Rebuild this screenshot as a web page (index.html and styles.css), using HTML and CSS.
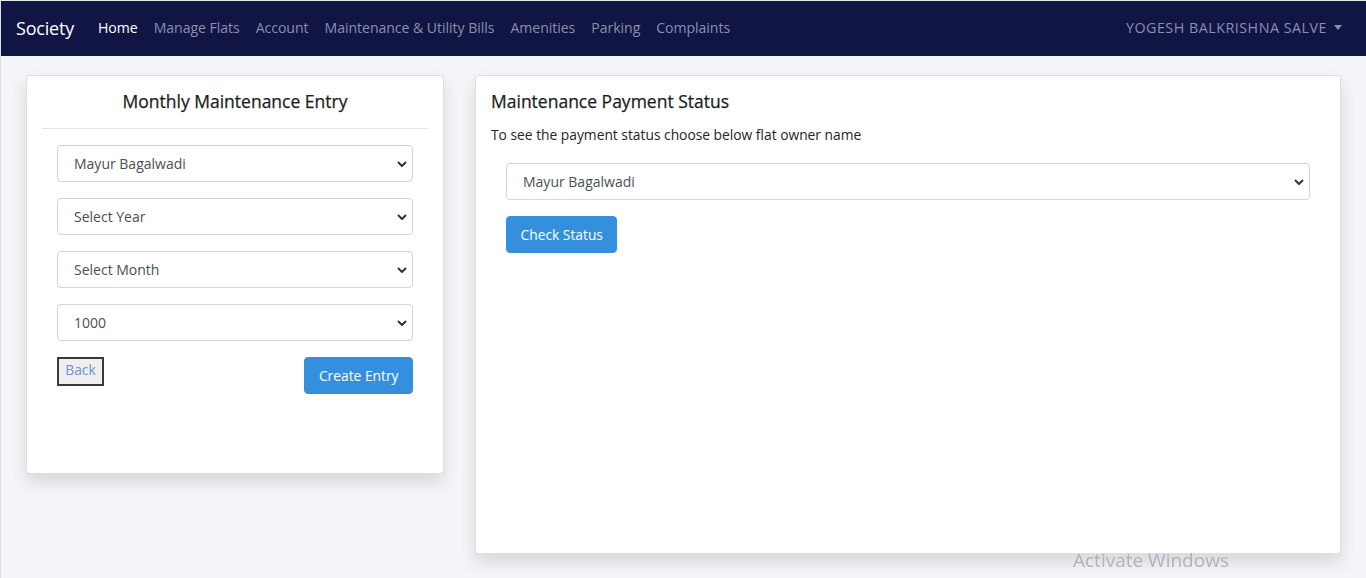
FILE: index.html
```html
<!DOCTYPE html>
<html>
<head>
<meta charset="utf-8">
<link rel="stylesheet" href="styles.css">
</head>
<body>
<nav class="navbar">
  <a class="brand">Society</a>
  <ul class="nav-links">
    <li class="active">Home</li>
    <li>Manage Flats</li>
    <li>Account</li>
    <li>Maintenance &amp; Utility Bills</li>
    <li>Amenities</li>
    <li>Parking</li>
    <li>Complaints</li>
  </ul>
  <div class="user">YOGESH BALKRISHNA SALVE <span class="caret"></span></div>
</nav>
<main class="main">
  <section class="card card-left">
    <h4 class="card-title center">Monthly Maintenance Entry</h4>
    <hr class="divider">
    <form class="form">
      <div class="select">Mayur Bagalwadi<svg viewBox="0 0 10 6" class="chev"><path d="M1 1l4 4 4-4" /></svg></div>
      <div class="select">Select Year<svg viewBox="0 0 10 6" class="chev"><path d="M1 1l4 4 4-4" /></svg></div>
      <div class="select">Select Month<svg viewBox="0 0 10 6" class="chev"><path d="M1 1l4 4 4-4" /></svg></div>
      <div class="select">1000<svg viewBox="0 0 10 6" class="chev"><path d="M1 1l4 4 4-4" /></svg></div>
      <div class="actions">
        <button type="button" class="btn-back">Back</button>
        <button type="button" class="btn-primary">Create Entry</button>
      </div>
    </form>
  </section>
  <section class="card card-right">
    <h4 class="card-title">Maintenance Payment Status</h4>
    <p class="desc">To see the payment status choose below flat owner name</p>
    <div class="form">
      <div class="select">Mayur Bagalwadi<svg viewBox="0 0 10 6" class="chev"><path d="M1 1l4 4 4-4" /></svg></div>
      <div class="actions-left">
        <button type="button" class="btn-primary">Check Status</button>
      </div>
    </div>
  </section>
</main>
<div class="watermark">Activate Windows<div class="wm-sub">Go to Settings to activate Windows.</div></div>
</body>
</html>
```
FILE: styles.css
```css
* { box-sizing: border-box; }
html, body { margin: 0; padding: 0; }
body {
  font-family: "Open Sans", "Noto Sans", sans-serif;
  font-size: 14px;
  color: #212529;
  background: #f4f5f9;
  height: 578px;
  overflow: hidden;
  border-left: 1px solid #dcdde3;
  border-top: 1px solid #e8e9ef;
}
.navbar {
  height: 55px;
  background: #101543;
  display: flex;
  align-items: center;
  padding: 0 15px 2px;
}
.brand {
  color: #fff;
  font-size: 18px;
  margin-right: 16px;
  letter-spacing: -0.2px;
}
.nav-links {
  list-style: none;
  margin: 0;
  padding: 0;
  display: flex;
  flex: 1;
}
.nav-links li {
  color: #8b8eae;
  padding: 0 8px;
  font-size: 14.1px;
  letter-spacing: -0.05px;
}
.nav-links li.active { color: #fff; }
.user {
  color: #8b8eae;
  font-size: 14.3px;
  display: flex;
  align-items: center;
  margin-right: 9px;
  letter-spacing: 0.5px;
}
.caret {
  display: inline-block;
  margin-left: 7px;
  border-top: 5px solid #8b8eae;
  border-left: 4px solid transparent;
  border-right: 4px solid transparent;
}
.main {
  display: flex;
  align-items: flex-start;
  gap: 31px;
  padding: 19px 25px 0 25px;
}
.card {
  background: #fff;
  border: 1px solid rgba(0,0,0,.13);
  border-radius: 4px;
  box-shadow: 0 8px 16px rgba(0,0,0,.12);
  padding: 15px 15px 16px;
}
.card-left { width: 418px; flex: none; height: 399px; }
.card-right { flex: 1; height: 479px; }
.card-title {
  margin: 0;
  font-size: 17.5px;
  font-weight: 500;
  line-height: 21px;
  color: #1a1d21;
  -webkit-text-stroke: 0.25px #1a1d21;
}
.card-title.center { text-align: center; }
.divider {
  margin: 16px 0 0;
  border: 0;
  border-top: 1px solid #e3e5e9;
}
.desc {
  margin: 13px 0 0;
  font-size: 13.8px;
  line-height: 20px;
}
.form {
  padding: 0 15px;
  display: flex;
  flex-direction: column;
  gap: 16px;
}
.card-left .form { margin-top: 16px; }
.card-right .form { margin-top: 18px; }
.select {
  height: 37px;
  border: 1px solid #ced4da;
  border-radius: 4px;
  display: flex;
  align-items: center;
  padding: 0 16px;
  font-size: 14px;
  color: #495057;
  position: relative;
}
.chev {
  position: absolute;
  right: 5px;
  top: 15px;
  width: 10px;
  height: 6px;
  fill: none;
  stroke: #333;
  stroke-width: 2;
}
.actions {
  display: flex;
  justify-content: space-between;
  align-items: flex-start;
}
.actions-left { display: flex; }
.btn-back {
  height: 29px;
  width: 47px;
  background: #efefef;
  border: 2px solid #3a3a3a;
  color: #6b93d6;
  font-family: inherit;
  font-size: 13.8px;
  padding: 0 0 4px;
}
.btn-primary {
  background: #3490dc;
  color: #fff;
  border: 1px solid #3490dc;
  border-radius: 4px;
  height: 37px;
  padding: 0 13.5px;
  font-family: inherit;
  font-size: 13.8px;
}
.watermark {
  position: fixed;
  left: 1073px;
  top: 548px;
  color: rgba(160,160,170,.75);
  font-size: 19px;
  font-family: "Open Sans", sans-serif;
  line-height: 24px;
}
.wm-sub { font-size: 13px; }
```
